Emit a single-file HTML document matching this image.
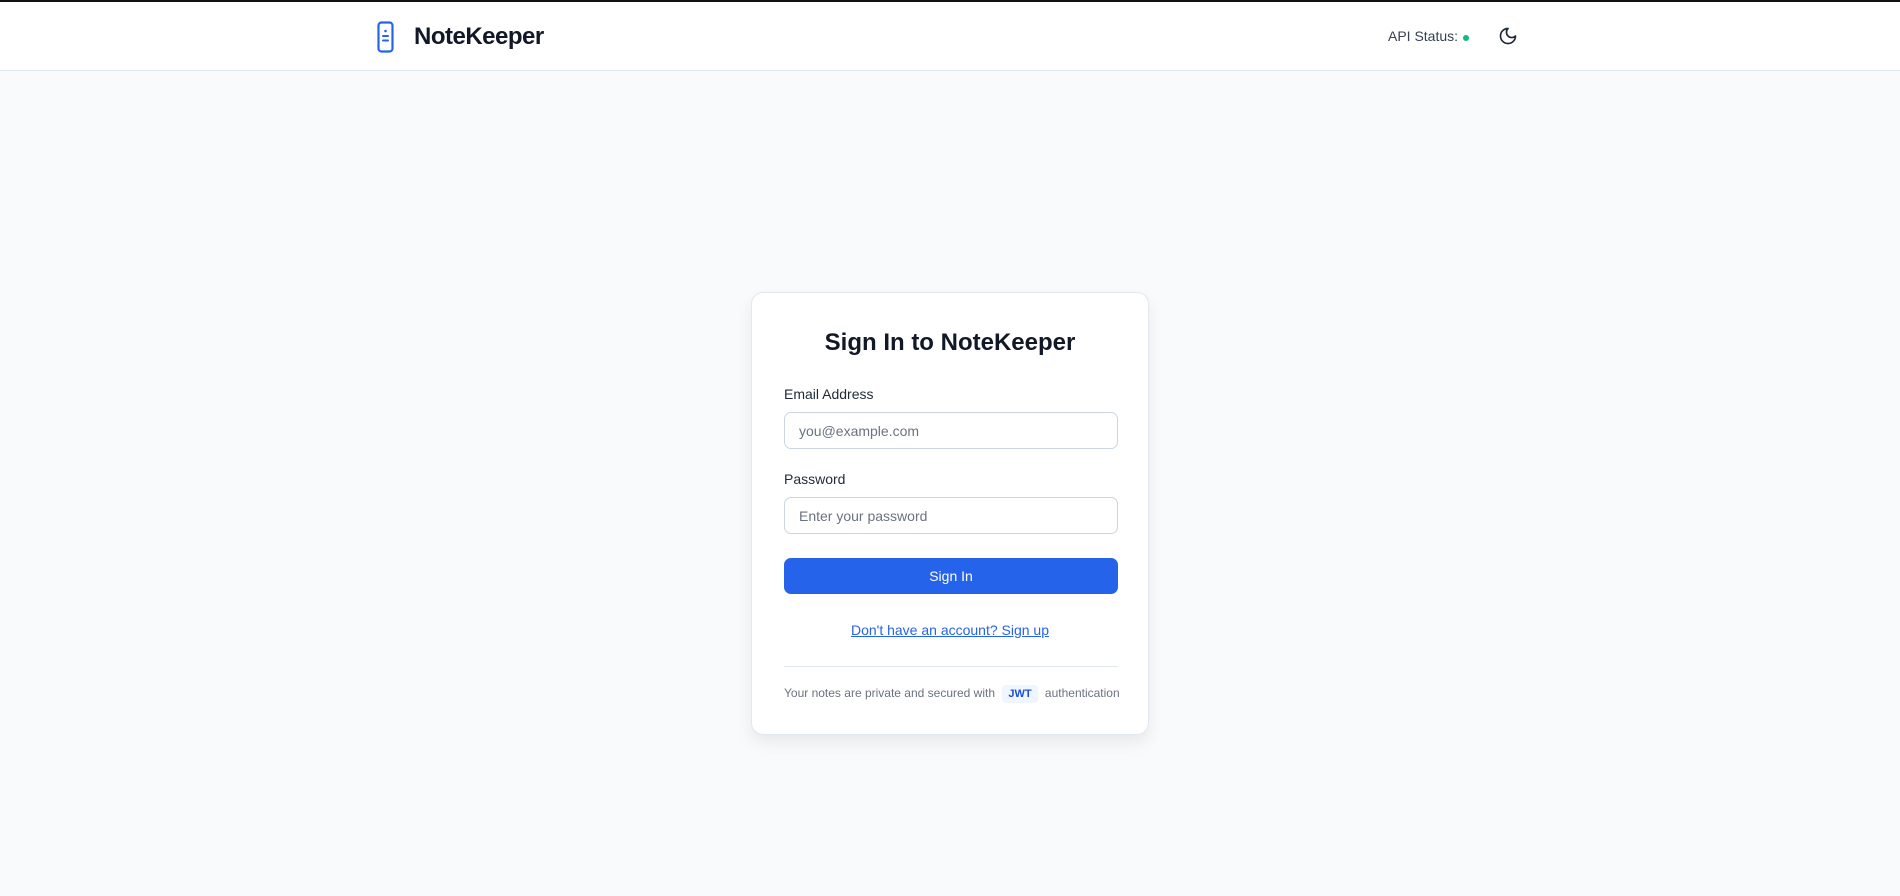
<!DOCTYPE html>
<html><head><meta charset="utf-8"><style>
*{box-sizing:border-box;margin:0;padding:0}
body{width:1900px;height:896px;background:#f8fafc;font-family:"Liberation Sans",sans-serif;border-top:2px solid #111;overflow:hidden}
.hdr{height:69px;background:#fff;border-bottom:1px solid #e2e8f0;position:relative}
.logo{position:absolute;left:377px;top:19px}
.brand{position:absolute;left:414px;top:21px;font-size:24px;font-weight:bold;color:#111827;letter-spacing:-0.5px}
.api{position:absolute;left:1388px;top:26px;font-size:14px;color:#374151}
.dot{position:absolute;left:1463px;top:33px;width:6px;height:6px;border-radius:50%;background:#10b981}
.moon{position:absolute;left:1498px;top:24px}
.card{position:absolute;left:751px;top:292px;width:398px;height:443px;background:#fff;border:1px solid #e2e8f0;border-radius:12px;box-shadow:0 8px 16px rgba(0,0,0,.07)}
h1{position:absolute;left:0;right:0;top:36px;text-align:center;font-size:24px;color:#111827}
.lbl{position:absolute;left:32px;font-size:14px;color:#1f2937}
.inp{position:absolute;left:32px;width:334px;height:37px;border:1px solid #cbd5e1;border-radius:7px;font-size:14px;color:#6b7280;padding:10px 14px}
.btn{position:absolute;left:32px;top:265px;width:334px;height:36px;background:#2563eb;border-radius:7px;color:#fff;font-size:14px;text-align:center;line-height:36px}
.link{position:absolute;left:0;right:0;top:329px;text-align:center;font-size:14px;color:#2563eb;text-decoration:underline}
.hr{position:absolute;left:32px;width:334px;top:373px;border-top:1px solid #e2e8f0}
.foot{position:absolute;left:32px;top:392px;font-size:12px;color:#6b7280;white-space:nowrap}
.jwt{display:inline-block;background:#eff6ff;color:#1d4ed8;font-weight:bold;font-size:11px;padding:3px 6px;border-radius:4px;margin:0 4px}
</style></head><body>
<div class="hdr">
<svg class="logo" width="18" height="32" viewBox="0 0 18 32"><rect x="1.5" y="1.5" width="14" height="29" rx="3" fill="none" stroke="#2563eb" stroke-width="2.2"/><circle cx="8.5" cy="10" r="1.3" fill="#2563eb"/><line x1="6" y1="15" x2="11" y2="15" stroke="#2563eb" stroke-width="2" stroke-linecap="round"/><line x1="6" y1="19.5" x2="11" y2="19.5" stroke="#2563eb" stroke-width="2" stroke-linecap="round"/></svg>
<div class="brand">NoteKeeper</div>
<div class="api">API Status:</div><div class="dot"></div>
<svg class="moon" width="20" height="20" viewBox="0 0 24 24" fill="none" stroke="#1f2937" stroke-width="2" stroke-linecap="round" stroke-linejoin="round"><path d="M12 3a6 6 0 0 0 9 9 9 9 0 1 1-9-9Z"/></svg>
</div>
<div class="card">
<h1>Sign In to NoteKeeper</h1>
<div class="lbl" style="top:93px">Email Address</div>
<div class="inp" style="top:119px">you@example.com</div>
<div class="lbl" style="top:178px">Password</div>
<div class="inp" style="top:204px">Enter your password</div>
<div class="btn">Sign In</div>
<div class="link">Don't have an account? Sign up</div>
<div class="hr"></div>
<div class="foot">Your notes are private and secured with <span class="jwt">JWT</span> authentication</div>
</div>
</body></html>
